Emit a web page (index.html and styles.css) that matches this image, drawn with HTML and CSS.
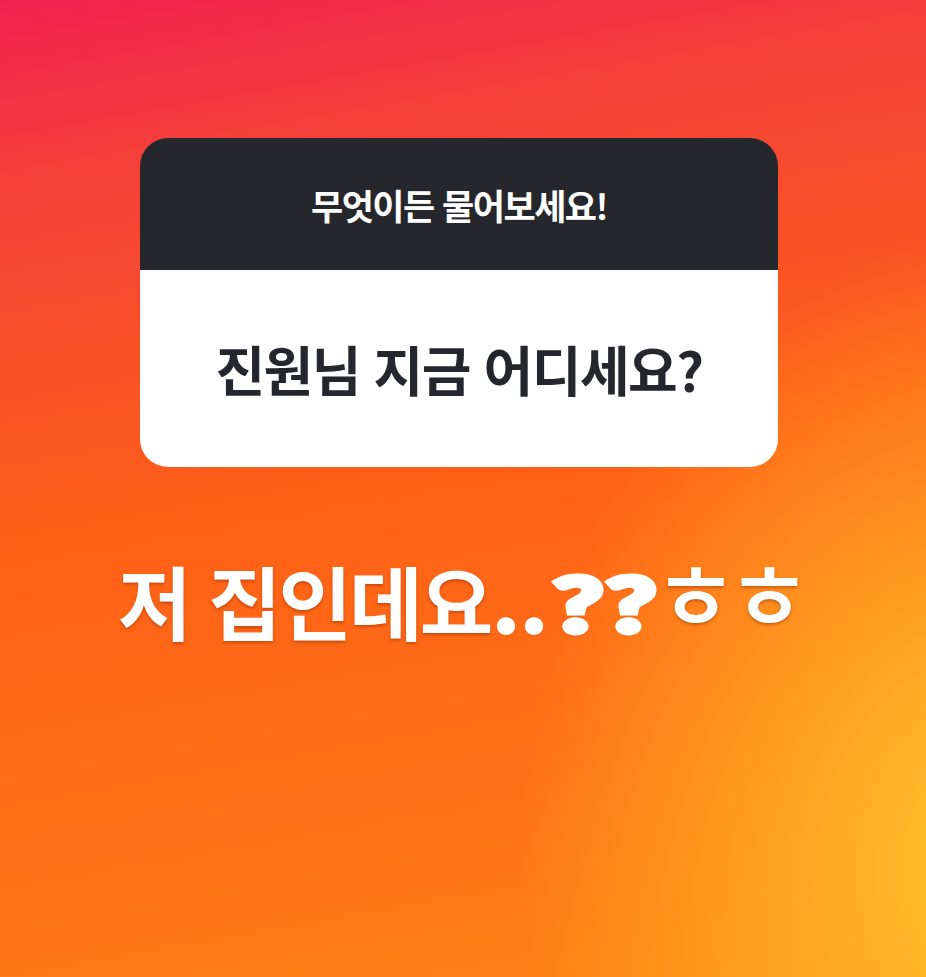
FILE: index.html
```html
<!DOCTYPE html>
<html lang="ko">

<head>
  <meta charset="UTF-8">
  <meta name="viewport" content="width=device-width, initial-scale=1.0">
  <title>질문 스티커</title>
  <link rel="stylesheet" href="styles.css">
</head>

<body>
  <main class="story">
    <article class="question-card">
      <header class="question-head">
        <h1 class="prompt">무엇이든 물어보세요!</h1>
      </header>
      <div class="question-body">
        <p class="question">진원님 지금 어디세요?</p>
      </div>
    </article>

    <p class="answer">
      <span class="answer-word">저 집인데요</span><span class="answer-dots">..</span><span class="answer-marks">??</span><span class="answer-laugh">ㅎㅎ</span>
    </p>
  </main>
</body>

</html>
```

FILE: styles.css
```css
*,
*::before,
*::after {
  box-sizing: border-box;
  margin: 0;
  padding: 0;
}

:root {
  /* COLORS */
  --story-pink: #f2204f;
  --story-red: #f4403a;
  --story-orange: #ff5f16;
  --story-orange-light: #ff8214;
  --story-yellow: #ffc52e;

  --card-dark: #25272c;
  --card-white: #ffffff;
  --text-dark: #25272c;

  /* FONTS */
  --ff-ko: "Noto Sans CJK KR", "Noto Sans", sans-serif;
  --ff-round: Lato, "Noto Sans CJK KR", sans-serif;
}

body {
  min-height: 100vh;
  font-family: var(--ff-ko);
}

.story {
  min-height: 977px;
  padding-top: 138px;
  padding-left: 140px;

  background:
    radial-gradient(ellipse 470px 620px at 990px 860px, rgba(255, 199, 46, 1) 0%, rgba(255, 186, 40, 0.8) 30%, rgba(255, 150, 30, 0) 100%),
    linear-gradient(170deg, var(--story-pink) 0%, var(--story-red) 16%, var(--story-orange) 48%, var(--story-orange-light) 100%);
}

.question-card {
  width: 638px;
  border-radius: 28px;
  overflow: hidden;
}

.question-head {
  display: grid;
  place-items: center;

  height: 132px;
  background-color: var(--card-dark);
}

.prompt {
  color: var(--card-white);
  font-size: 35px;
  font-weight: 700;
  letter-spacing: -1.5px;
}

.question-body {
  display: grid;
  place-items: center;

  height: 197px;
  background-color: var(--card-white);
}

.question {
  color: var(--text-dark);
  font-size: 54px;
  font-weight: 700;
  letter-spacing: -1.5px;
}

/* answer line: the word sets the line box, the rest sits on it */
.answer {
  margin-top: 84px;
  margin-left: -22px;

  color: var(--card-white);
  text-shadow: 0 2px 3px rgba(140, 40, 0, 0.45);
  white-space: nowrap;
  line-height: 1.2;
}

.answer-word {
  font-size: 80px;
  font-weight: 700;
  letter-spacing: -3px;
}

.answer-dots {
  vertical-align: 2px;
  margin-left: 6px;
  line-height: 0;

  font-family: var(--ff-round);
  font-size: 80px;
  font-weight: 900;
  letter-spacing: 9px;
  -webkit-text-stroke: 5px var(--card-white);
}

/* chunky sticker question marks */
.answer-marks {
  display: inline-block;
  vertical-align: 2px;
  margin-right: 26px;
  line-height: 0;
  transform: scaleX(1.42);
  transform-origin: left center;

  font-family: var(--ff-round);
  font-size: 76px;
  font-weight: 900;
  letter-spacing: 2px;
  -webkit-text-stroke: 6px var(--card-white);
}

.answer-laugh {
  vertical-align: 3px;
  line-height: 0;

  font-size: 92px;
  font-weight: 500;
  letter-spacing: -11px;
}
```
